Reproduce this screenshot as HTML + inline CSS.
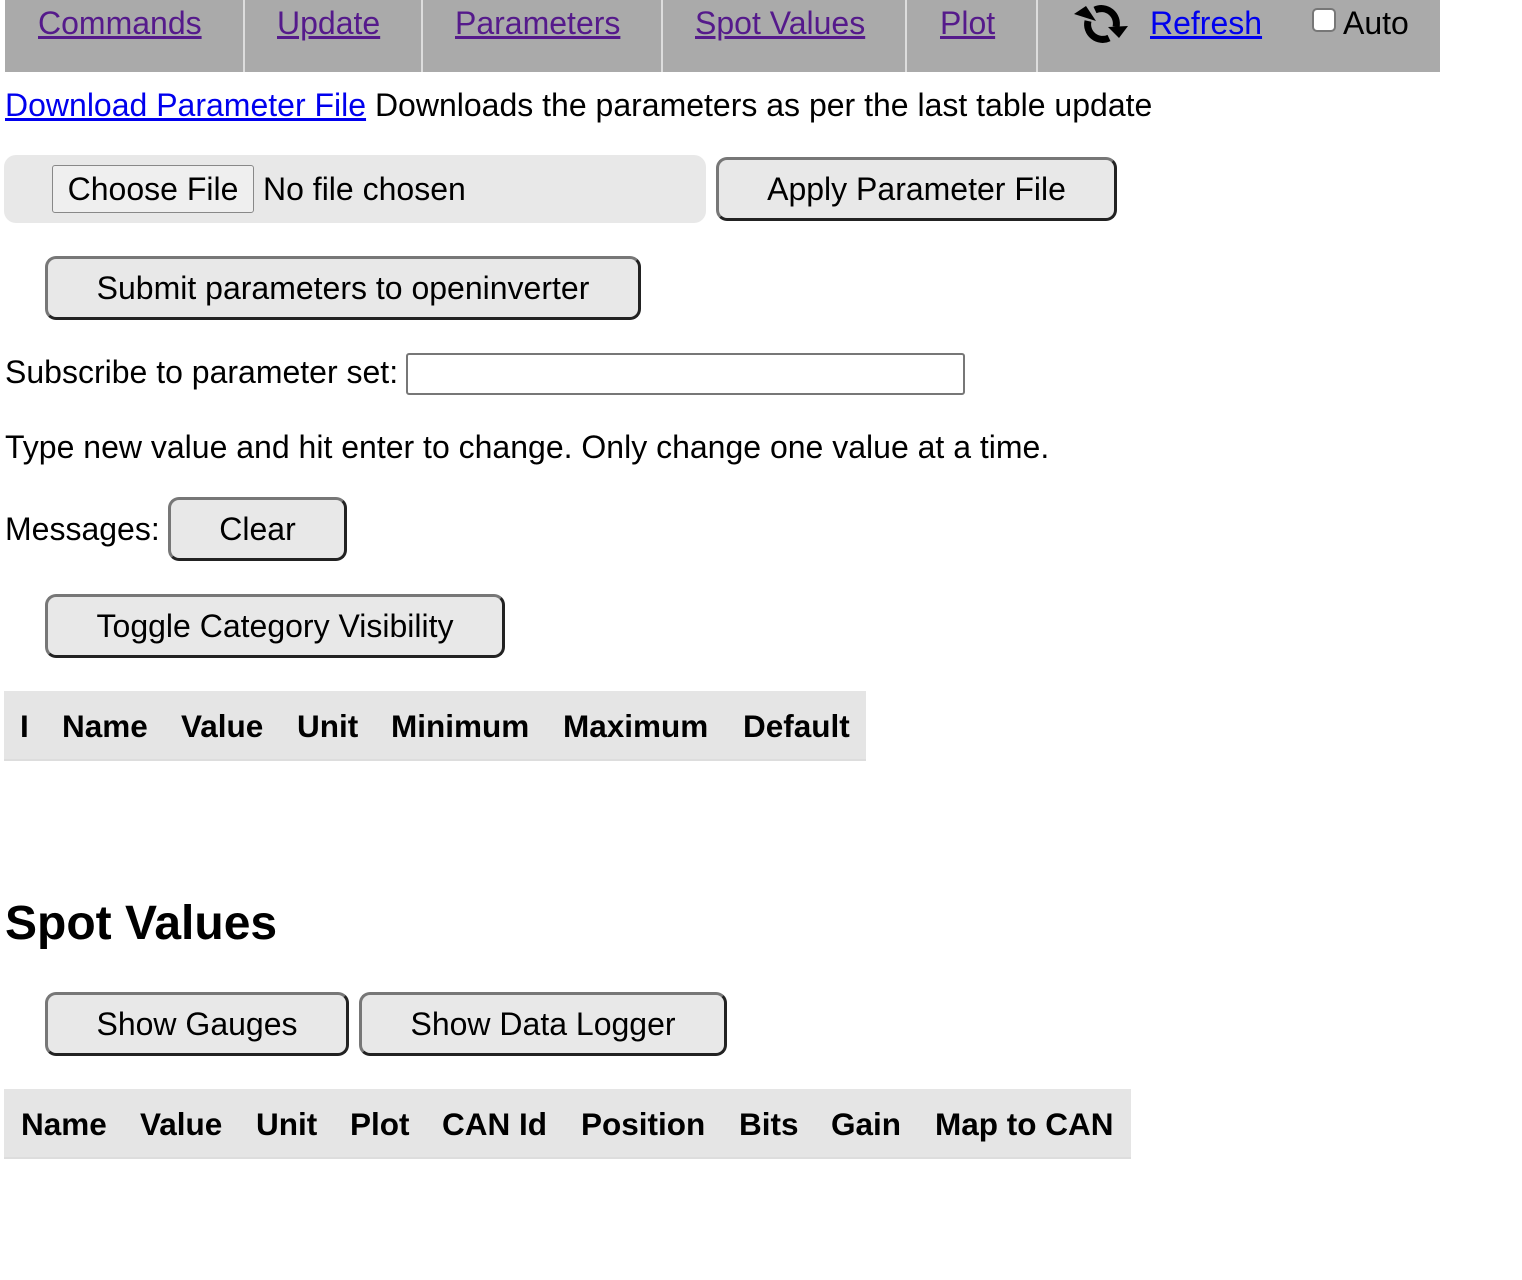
<!DOCTYPE html>
<html><head><meta charset="utf-8">
<style>
html,body{margin:0;padding:0;width:1522px;height:1280px;background:#fff;overflow:hidden;position:relative;font-family:"Liberation Sans",Arial,sans-serif;font-size:32px;color:#000}
.t{position:absolute;line-height:34px;white-space:nowrap}
.nav{position:absolute;left:5px;top:0;width:1435px;height:72px;background:#aaa}
.div{position:absolute;top:0;width:2px;height:72px;background:#ddd}
.nl{color:#551a8b;text-decoration:underline}
.bl{color:#0000ee;text-decoration:underline}
.btn{position:absolute;box-sizing:border-box;background:#e8e8e8;border:3px solid;border-color:#777 #222 #222 #777;border-radius:11px;text-align:center;font-size:32px;line-height:58px;white-space:nowrap}
.b{font-weight:bold;font-size:31.5px}
</style></head><body>
<div class="nav"></div>
<div class="div" style="left:243px"></div>
<div class="div" style="left:421px"></div>
<div class="div" style="left:661px"></div>
<div class="div" style="left:905px"></div>
<div class="div" style="left:1036px"></div>
<span class="t nl" style="left:38px;top:6px">Commands</span>
<span class="t nl" style="left:277px;top:6px">Update</span>
<span class="t nl" style="left:455px;top:6px">Parameters</span>
<span class="t nl" style="left:695px;top:6px">Spot Values</span>
<span class="t nl" style="left:940px;top:6px">Plot</span>
<svg style="position:absolute;left:1070px;top:0" width="64" height="50" viewBox="0 0 64 50">
<g fill="none" stroke="#000" stroke-width="7">
<path d="M25 10 A15 15 0 0 1 46 27"/>
<path d="M39 38 A15 15 0 0 1 18 21"/>
</g>
<path d="M38 27 L58 26 L49 38 Z" fill="#000"/>
<path d="M26 21 L4 14 L16 6 Z" fill="#000"/>
</svg>
<span class="t bl" style="left:1150px;top:6px">Refresh</span>
<div style="position:absolute;left:1312px;top:8px;width:24px;height:24px;box-sizing:border-box;border:2px solid #777;border-radius:5px;background:#fff"></div>
<span class="t" style="left:1343px;top:6px">Auto</span>

<span class="t" style="left:5px;top:88px"><span class="bl">Download Parameter File</span> Downloads the parameters as per the last table update</span>

<div style="position:absolute;left:4px;top:155px;width:702px;height:68px;background:#e8e8e8;border-radius:12px"></div>
<div style="position:absolute;left:52px;top:165px;width:202px;height:48px;box-sizing:border-box;border:1px solid #888;border-radius:3px;background:#efefef;text-align:center;line-height:46px">Choose File</div>
<span class="t" style="left:263px;top:172px">No file chosen</span>
<div class="btn" style="left:716px;top:157px;width:401px;height:64px">Apply Parameter File</div>

<div class="btn" style="left:45px;top:256px;width:596px;height:64px">Submit parameters to openinverter</div>

<span class="t" style="left:5px;top:355px">Subscribe to parameter set:</span>
<div style="position:absolute;left:406px;top:353px;width:559px;height:42px;box-sizing:border-box;border:2px solid #777;border-radius:3px;background:#fff"></div>

<span class="t" style="left:5px;top:430px">Type new value and hit enter to change. Only change one value at a time.</span>

<span class="t" style="left:5px;top:512px">Messages:</span>
<div class="btn" style="left:168px;top:497px;width:179px;height:64px">Clear</div>

<div class="btn" style="left:45px;top:594px;width:460px;height:64px">Toggle Category Visibility</div>

<div style="position:absolute;left:4px;top:691px;width:862px;height:70px;background:#e5e5e5;border-bottom:2px solid #ddd;box-sizing:border-box"></div>
<span class="t b" style="left:20px;top:709px">I</span>
<span class="t b" style="left:62px;top:709px">Name</span>
<span class="t b" style="left:181px;top:709px">Value</span>
<span class="t b" style="left:297px;top:709px">Unit</span>
<span class="t b" style="left:391px;top:709px">Minimum</span>
<span class="t b" style="left:563px;top:709px">Maximum</span>
<span class="t b" style="left:743px;top:709px">Default</span>

<span class="t" style="left:5px;top:897px;font-size:48px;line-height:54px;font-weight:bold">Spot Values</span>

<div class="btn" style="left:45px;top:992px;width:304px;height:64px">Show Gauges</div>
<div class="btn" style="left:359px;top:992px;width:368px;height:64px">Show Data Logger</div>

<div style="position:absolute;left:4px;top:1089px;width:1127px;height:70px;background:#e5e5e5;border-bottom:2px solid #ddd;box-sizing:border-box"></div>
<span class="t b" style="left:21px;top:1107px">Name</span>
<span class="t b" style="left:140px;top:1107px">Value</span>
<span class="t b" style="left:256px;top:1107px">Unit</span>
<span class="t b" style="left:350px;top:1107px">Plot</span>
<span class="t b" style="left:442px;top:1107px">CAN Id</span>
<span class="t b" style="left:581px;top:1107px">Position</span>
<span class="t b" style="left:739px;top:1107px">Bits</span>
<span class="t b" style="left:831px;top:1107px">Gain</span>
<span class="t b" style="left:935px;top:1107px">Map to CAN</span>
</body></html>
